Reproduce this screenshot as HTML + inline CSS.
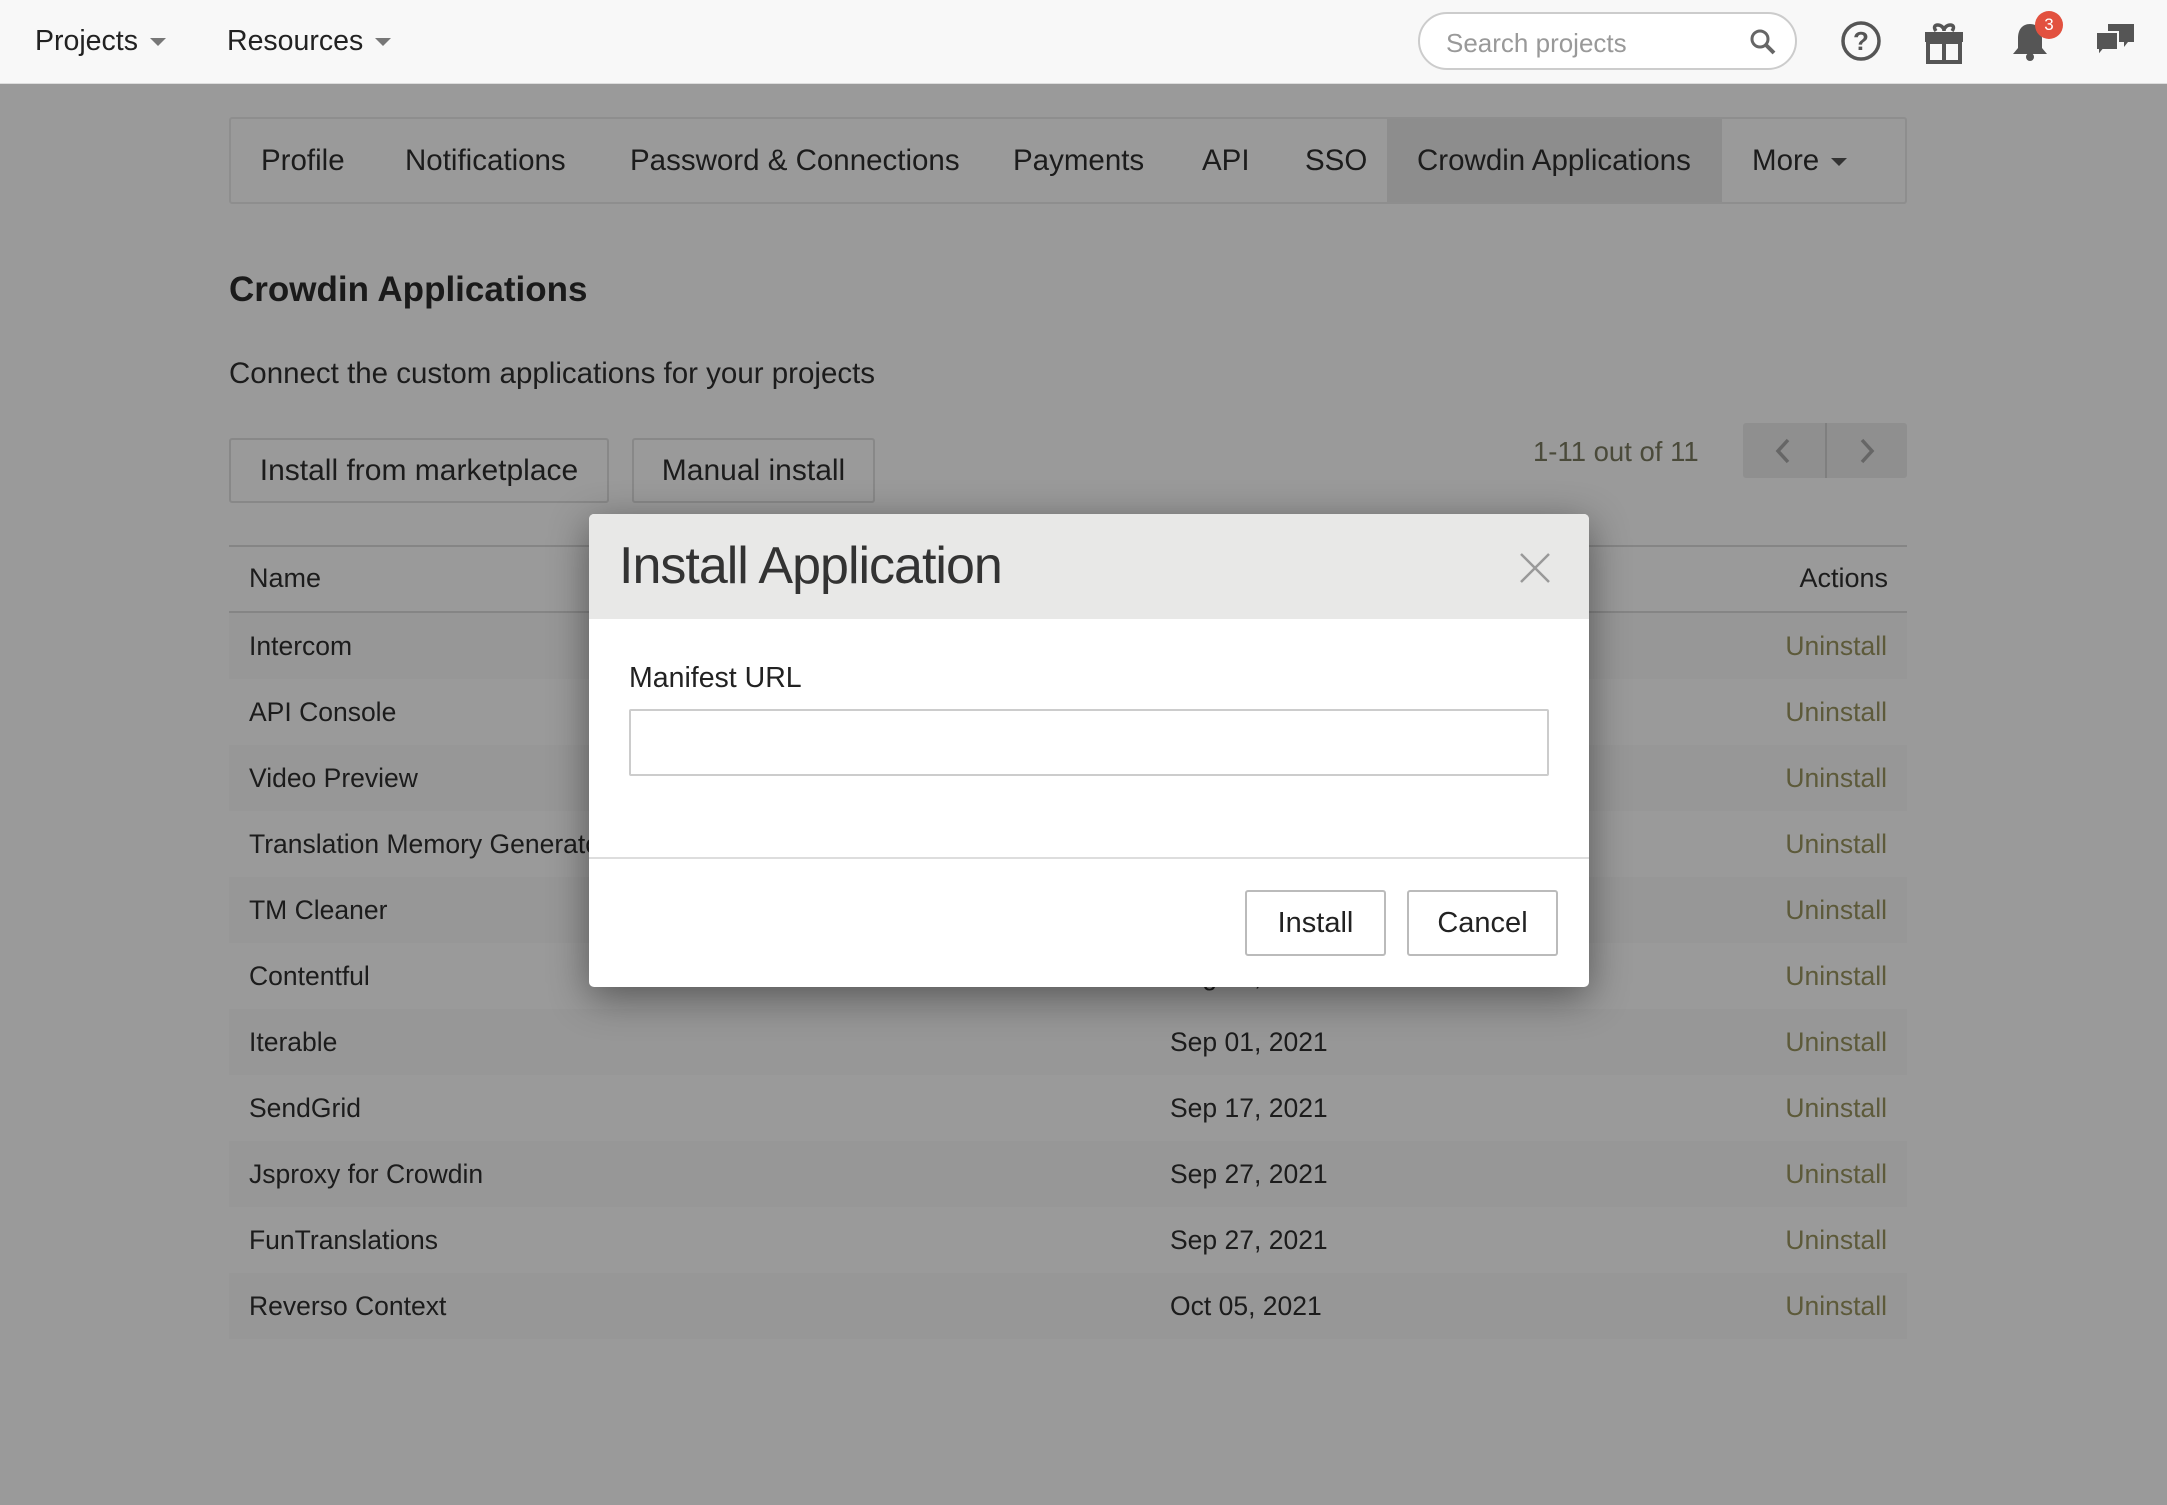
<!DOCTYPE html>
<html><head><meta charset="utf-8"><style>
*{box-sizing:border-box;margin:0;padding:0}
body{width:2167px;height:1505px;background:#9a9a9a;font-family:"Liberation Sans",sans-serif;color:#1c1c1c;position:relative;overflow:hidden}
.abs{position:absolute}
.nav{left:0;top:0;width:2167px;height:84px;background:#f8f8f8;border-bottom:1px solid #ddd}
.nav .it{top:25px;font-size:28.5px;color:#222}
.caret{display:inline-block;width:0;height:0;border-left:8px solid transparent;border-right:8px solid transparent;border-top:8px solid #777;margin-left:12px;vertical-align:middle}
.search{left:1418px;top:12px;width:379px;height:58px;border:2px solid #ccc;border-radius:29px;background:#fff;font-size:26px;color:#999;padding:14px 0 0 26px}
.tabs{left:229px;top:117px;width:1678px;height:87px;border:2px solid #8e8e8e;border-radius:3px}
.tab{top:25px;font-size:29.5px;color:#1c1c1c}
.row{left:229px;width:1678px;height:66px;font-size:26.5px}
.row span{position:absolute;top:18px}
.un{right:20px;color:#5d5a3a}
.btn{border:2px solid #888;border-radius:3px;font-size:30px;text-align:center;color:#1c1c1c}
</style></head><body>
<div class="abs nav">
 <div class="abs it" style="left:35px">Projects<span class="caret"></span></div>
 <div class="abs it" style="left:227px">Resources<span class="caret"></span></div>
 <div class="abs search">Search projects
  <svg class="abs" style="right:18px;top:14px" width="28" height="28" viewBox="0 0 28 28"><circle cx="11" cy="11" r="8" fill="none" stroke="#666" stroke-width="3"/><path d="M17 17l8 8" stroke="#666" stroke-width="4"/></svg></div>
 <svg class="abs" style="left:1840px;top:20px" width="42" height="42" viewBox="0 0 42 42"><circle cx="21" cy="21" r="18" fill="none" stroke="#555" stroke-width="3.5"/><text x="21" y="30" text-anchor="middle" font-family="Liberation Sans" font-size="26" font-weight="bold" fill="#555">?</text></svg>
 <svg class="abs" style="left:1922px;top:20px" width="44" height="44" viewBox="0 0 44 44"><path d="M14 11c-6-8 8-8 8 0c0-8 14-8 8 0" fill="none" stroke="#555" stroke-width="3.5"/><rect x="3" y="12" width="38" height="10" fill="#555"/><rect x="6" y="22" width="32" height="20" fill="none" stroke="#555" stroke-width="4"/><rect x="20" y="12" width="4" height="30" fill="#555"/></svg>
 <svg class="abs" style="left:2010px;top:20px" width="40" height="42" viewBox="0 0 40 42"><path d="M20 4c-8 0-12 6-12 14v10l-5 6h34l-5-6V18c0-8-4-14-12-14z" fill="#555"/><circle cx="20" cy="37" r="4" fill="#555"/></svg>
 <div class="abs" style="left:2035px;top:11px;width:28px;height:28px;border-radius:14px;background:#e2513f;color:#fff;font-size:17px;text-align:center;line-height:28px">3</div>
 <svg class="abs" style="left:2094px;top:22px" width="42" height="38" viewBox="0 0 42 38"><path d="M14 2h26v18h-6l-4 5v-5H14z" fill="#555"/><path d="M2 10h22v18H9l-5 6v-6H2z" fill="#555" stroke="#f8f8f8" stroke-width="2"/></svg>
</div>

<div class="abs tabs">
 <div class="abs" style="left:1156px;top:0;width:335px;height:83px;background:#8d8d8d"></div>
 <div class="abs tab" style="left:30px">Profile</div>
 <div class="abs tab" style="left:174px">Notifications</div>
 <div class="abs tab" style="left:399px">Password &amp; Connections</div>
 <div class="abs tab" style="left:782px">Payments</div>
 <div class="abs tab" style="left:971px">API</div>
 <div class="abs tab" style="left:1074px">SSO</div>
 <div class="abs tab" style="left:1186px">Crowdin Applications</div>
 <div class="abs tab" style="left:1521px">More<span class="caret" style="border-top-color:#333"></span></div>
</div>

<div class="abs" style="left:229px;top:270px;font-size:35px;font-weight:bold;color:#1a1a1a">Crowdin Applications</div>
<div class="abs" style="left:229px;top:357px;font-size:29.5px">Connect the custom applications for your projects</div>
<div class="abs btn" style="left:229px;top:438px;width:380px;height:65px;line-height:61px">Install from marketplace</div>
<div class="abs btn" style="left:632px;top:438px;width:243px;height:65px;line-height:61px">Manual install</div>
<div class="abs" style="left:1533px;top:436px;font-size:27.5px;color:#4a4a3a">1-11 out of 11</div>
<div class="abs" style="left:1743px;top:423px;width:164px;height:55px;background:#8f8f8f;border-radius:3px">
 <div class="abs" style="left:82px;top:0;width:2px;height:55px;background:#7f7f7f"></div>
 <svg class="abs" style="left:28px;top:14px" width="24" height="28" viewBox="0 0 24 28"><path d="M17 3L7 14l10 11" fill="none" stroke="#666" stroke-width="3.5"/></svg>
 <svg class="abs" style="left:112px;top:14px" width="24" height="28" viewBox="0 0 24 28"><path d="M7 3l10 11L7 25" fill="none" stroke="#666" stroke-width="3.5"/></svg>
</div>

<div class="abs" style="left:229px;top:545px;width:1678px;height:2px;background:#858585"></div>
<div class="abs" style="left:249px;top:563px;font-size:27px">Name</div>
<div class="abs" style="right:279px;top:563px;font-size:27px">Actions</div>
<div class="abs" style="left:229px;top:611px;width:1678px;height:2px;background:#858585"></div>

<div class="abs row" style="top:613px;background:#979797"><span style="left:20px">Intercom</span><span style="left:941px">Aug 10, 2021</span><span class="un">Uninstall</span></div>
<div class="abs row" style="top:679px"><span style="left:20px">API Console</span><span style="left:941px">Aug 10, 2021</span><span class="un">Uninstall</span></div>
<div class="abs row" style="top:745px;background:#979797"><span style="left:20px">Video Preview</span><span style="left:941px">Aug 10, 2021</span><span class="un">Uninstall</span></div>
<div class="abs row" style="top:811px"><span style="left:20px">Translation Memory Generator</span><span style="left:941px">Aug 10, 2021</span><span class="un">Uninstall</span></div>
<div class="abs row" style="top:877px;background:#979797"><span style="left:20px">TM Cleaner</span><span style="left:941px">Aug 10, 2021</span><span class="un">Uninstall</span></div>
<div class="abs row" style="top:943px"><span style="left:20px">Contentful</span><span style="left:941px">Aug 31, 2021</span><span class="un">Uninstall</span></div>
<div class="abs row" style="top:1009px;background:#979797"><span style="left:20px">Iterable</span><span style="left:941px">Sep 01, 2021</span><span class="un">Uninstall</span></div>
<div class="abs row" style="top:1075px"><span style="left:20px">SendGrid</span><span style="left:941px">Sep 17, 2021</span><span class="un">Uninstall</span></div>
<div class="abs row" style="top:1141px;background:#979797"><span style="left:20px">Jsproxy for Crowdin</span><span style="left:941px">Sep 27, 2021</span><span class="un">Uninstall</span></div>
<div class="abs row" style="top:1207px"><span style="left:20px">FunTranslations</span><span style="left:941px">Sep 27, 2021</span><span class="un">Uninstall</span></div>
<div class="abs row" style="top:1273px;background:#979797"><span style="left:20px">Reverso Context</span><span style="left:941px">Oct 05, 2021</span><span class="un">Uninstall</span></div>

<div class="abs" style="left:589px;top:514px;width:1000px;height:473px;background:#fff;border-radius:5px;box-shadow:0 10px 40px rgba(0,0,0,.45);overflow:hidden">
 <div class="abs" style="left:0;top:0;width:1000px;height:105px;background:#e8e8e7"></div>
 <div class="abs" style="left:30px;top:22px;font-size:52px;color:#333;letter-spacing:-1px">Install Application</div>
 <svg class="abs" style="left:930px;top:38px" width="32" height="32" viewBox="0 0 32 32"><path d="M2 2l28 28M30 2L2 30" stroke="#999" stroke-width="2.5"/></svg>
 <div class="abs" style="left:40px;top:148px;font-size:28.5px;color:#222">Manifest URL</div>
 <div class="abs" style="left:40px;top:195px;width:920px;height:67px;border:2px solid #ccc;border-radius:2px"></div>
 <div class="abs" style="left:0;top:343px;width:1000px;height:2px;background:#ddd"></div>
 <div class="abs btn" style="left:656px;top:376px;width:141px;height:66px;line-height:62px;border-color:#bbb;color:#222;font-size:29px">Install</div>
 <div class="abs btn" style="left:818px;top:376px;width:151px;height:66px;line-height:62px;border-color:#bbb;color:#222;font-size:29px">Cancel</div>
</div>
</body></html>
